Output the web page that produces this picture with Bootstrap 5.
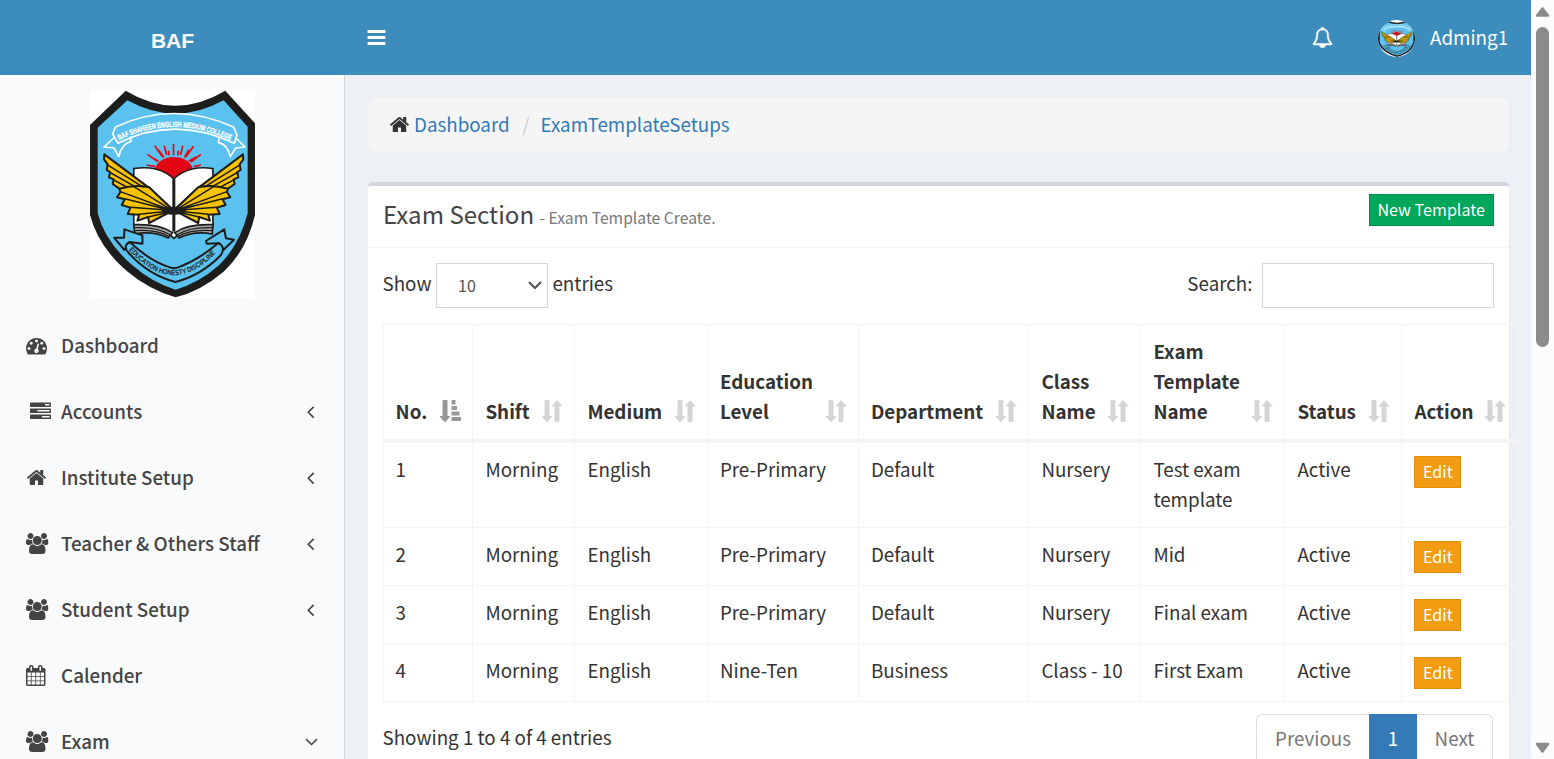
<!DOCTYPE html>
<html lang="en">
<head>
<meta charset="utf-8">
<title>Exam Template Setups</title>
<link rel="stylesheet" href="https://cdn.jsdelivr.net/npm/bootstrap@5.3.0/dist/css/bootstrap.min.css">
<style>
  html, body { height: 759px; overflow: hidden; }
  body { font-family: "Noto Sans CJK SC", "Open Sans", sans-serif; font-size: 18.8px; line-height: 30px; color: #333; background: #ecf0f5; }
  a { text-decoration: none; color: #337ab7; }
  .fa { width: 21px; height: 21px; fill: currentColor; display: block; flex: none; }
  .fa-wide { width: 22.5px; }
  .viewport { width: 1531px; height: 759px; overflow: hidden; }
  .topbar { height: 75px; background: #3c8dbc; color: #fff; }
  .brand { width: 345px; font: 700 21px/82px "Liberation Sans", sans-serif; text-align: center; height: 75px; }
  .bars { margin-left: 21px; }
  .bell { stroke: #fff; stroke-width: 40; }
  .avatar { width: 37px; height: 37px; overflow: hidden; border-radius: 50%; margin: 1px 15px 0 45px; }
  .who { width: 101px; padding-bottom: 2px; }
  .sidebar { width: 345px; background: #f9fafc; border-right: 1px solid #d2d6de; height: 684px; }
  .crest { width: 165px; height: 208px; margin: 15px 0 0 90px; display: block; }
  .menu { margin-top: 14px; }
  .menu a { height: 66px; color: #444; font-weight: 500; padding-left: 26px; padding-right: 23.5px; }
  .menu .ico { width: 35px; flex: none; }
  .menu .turned { margin-right: -1px; }
  .pagebody { width: 1186px; padding: 23px 22px 0 23px; }
  .crumbs { height: 54px; background: #f5f5f5; border-radius: 7px; padding: 0 21.5px 2px; }
  .crumbs .fa { margin-right: 4px; margin-left: -.5px; }
  .crumbs .slash { color: #ccc; margin: 0 11px 0 12.5px; }
  .panel { margin-top: 30px; background: #fff; border-top: 4px solid #d2d6de; border-radius: 5px 5px 0 0; box-shadow: 0 1px 1px rgba(0,0,0,.1); height: 640px; }
  .panel-top { height: 62px; border-bottom: 1px solid #f4f4f4; padding: 8px 15px; }
  .panel-top h3 { font-size: 24.1px; line-height: 42px; font-weight: 400; margin: -1px 0 0; color: #444; }
  .panel-top small { font-size: 15.7px; color: #777; }
  .btn-flat { border-radius: 0; height: 32px; font-size: 16.1px; line-height: 28px; padding: 0 8px 0 7px; color: #fff; display: inline-block; white-space: nowrap; }
  .btn-make { background: #00a65a; border: 1px solid #008d4c; }
  .btn-edit { background: #f39c12; border: 1px solid #e08e0b; margin-top: 2px; display: block; width: 47px; text-align: center; padding: 0; }
  .tools { padding: 15px 15px 0 14.5px; height: 76px; }
  .tools .lbl { padding-top: 5px; }
  .tools .field { height: 45px; border: 1px solid #d2d6de; border-radius: 0; background: #fff; }
  .tools .pick { width: 112px; margin: 0 4.5px; padding: 0 5px 0 21px; font-size: 16.1px; color: #555; }
  .pick span { padding-bottom: 2px; }
  .tools .seek { width: 232px; margin-left: 9.5px; }
  .grid { table-layout: fixed; width: 1136px; margin-left: 15px; border-collapse: separate; border-spacing: 0; border: 1px solid #f4f4f4; border-width: 1px 0 0 1px; }
  .grid th, .grid td { padding: 11px 0 0 12.4px; border-right: 1px solid #f4f4f4; border-bottom: 1px solid #f4f4f4; height: 58px; vertical-align: top; }
  .grid th { height: 118px; vertical-align: bottom; border-bottom-width: 4px; padding: 0 11.5px 13px 12.4px; font-weight: 700; }
  .grid tr > :first-child { padding-left: 11.6px; }
  .grid tr > :nth-child(4), .grid tr > :nth-child(5) { padding-left: 11.9px; }
  .grid tbody tr:first-child td { height: 85px; padding-right: 12px; }
  .grid th svg { width: 22px; height: 22px; fill: #333; flex: none; margin: 0 0 4px -22px; opacity: .2; display: block; }
  .grid th svg.on { opacity: .5; }
  .grid th:last-child svg { margin-right: 1px; }
  .tail { padding: 12px 16px 0 14.5px; }
  .count { padding-top: 8px; }
  .pager > a { height: 51px; line-height: 46px; border: 1px solid #ddd; text-align: center; color: #777; }
  .pager .wide { width: 113px; }
  .pager .next { width: 76px; }
  .pager .now { width: 48px; background: #337ab7; border-color: #337ab7; color: #fff; }
  .rail { width: 23px; height: 759px; background: #fcfcfc; }
  .rail .thumb { width: 13px; height: 320px; border-radius: 7px; background: #8b8b8b; margin: 6px 0 0 5px; }
</style>
</head>
<body class="d-flex">
<svg width="0" height="0" class="position-absolute">
  <defs>
    <symbol id="home" viewBox="0 0 1792 1792"><path d="M1472 992v480q0 26-19 45t-45 19h-384v-384h-256v384h-384q-26 0-45-19t-19-45v-480q0-1 .5-3t.5-3l575-474 575 474q1 2 1 6zm223-69l-62 74q-8 9-21 11h-3q-13 0-21-7l-692-577-692 577q-12 8-24 7-13-2-21-11l-62-74q-8-10-7-23.5t11-21.5l719-599q32-26 76-26t76 26l244 204v-195q0-14 9-23t23-9h192q14 0 23 9t9 23v408l219 182q10 8 11 21.5t-7 23.5z"/></symbol>
    <symbol id="users" viewBox="0 0 1920 1792"><path d="M593 896q-162 5-265 128h-134q-82 0-138-40.5t-56-118.5q0-353 124-353 6 0 43.5 21t97.5 42.5 119 21.5q67 0 133-23-5 37-5 66 0 139 81 256zm1071 637q0 120-73 189.5t-194 69.5h-874q-121 0-194-69.5t-73-189.5q0-53 3.5-103.5t14-109 26.5-108.5 43-97.5 62-81 85.5-53.5 111.5-20q10 0 43 21.5t73 48 107 48 135 21.5 135-21.5 107-48 73-48 43-21.5q61 0 111.5 20t85.5 53.5 62 81 43 97.5 26.5 108.5 14 109 3.5 103.5zm-1024-1277q0 106-75 181t-181 75-181-75-75-181 75-181 181-75 181 75 75 181zm704 384q0 159-112.5 271.5t-271.5 112.5-271.5-112.5-112.5-271.5 112.5-271.5 271.5-112.5 271.5 112.5 112.5 271.5zm576 225q0 78-56 118.5t-138 40.5h-134q-103-123-265-128 81-117 81-256 0-29-5-66 66 23 133 23 59 0 119-21.5t97.5-42.5 43.5-21q124 0 124 353zm-128-609q0 106-75 181t-181 75-181-75-75-181 75-181 181-75 181 75 75 181z"/></symbol>
    <symbol id="left" viewBox="0 0 1792 1792"><path d="M1203 544q0 13-10 23l-393 393 393 393q10 10 10 23t-10 23l-50 50q-10 10-23 10t-23-10l-466-466q-10-10-10-23t10-23l466-466q10-10 23-10t23 10l50 50q10 10 10 23z"/></symbol>
    <symbol id="down" viewBox="0 0 1792 1792"><path d="M1395 736q0 13-10 23l-466 466q-10 10-23 10t-23-10l-466-466q-10-10-10-23t10-23l50-50q10-10 23-10t23 10l393 393 393-393q10-10 23-10t23 10l50 50q10 10 10 23z"/></symbol>
    <symbol id="sort" viewBox="0 0 22 22"><path d="M3.5 1q0-1 1-1h3q1 0 1 1v15h2.2q.9 0 .3.8l-4.4 4.9q-.6.6-1.2 0L.8 16.8q-.6-.8.3-.8h2.4zM13.5 21q0 1 1 1h3q1 0 1-1V6.500h2.400q.9 0 .3-.8L16.600.8q-.6-.6-1.200 0L11 5.700q-.6.8.3.8h2.200z"/></symbol>
    <symbol id="sorted" viewBox="0 0 22 22"><path d="M3.500 1q0-1 1-1h3q1 0 1 1v15h2.200q.9 0 .3.8l-4.400 4.900q-.6.6-1.200 0L.8 16.800q-.6-.8.3-.8h2.400zM12.500 0h4v4.500h-4zM12.500 6h5.500v4h-5.500zM12.500 11.500h8v4h-8zM12.500 17h9.500v4h-9.500z"/></symbol>
    <symbol id="crest" viewBox="30 30 494 624" preserveAspectRatio="none">
      <path fill="#fff" d="M30 30h494v624H30z"/>
      <path fill="#1d1d1b" d="M137 32Q285 122 435 32L524 130V405Q500 510 430 575Q360 634 286 652Q205 628 140 573Q55 500 30 405V135Z"/>
      <path fill="#5bc2f0" d="M142 61Q285 141 430 61L502 140V400Q478 495 416 556Q355 610 286 629Q215 607 156 555Q75 485 53 400V143Z"/>
      <g fill="none" stroke="#fff" stroke-width="5" stroke-linejoin="round">
        <path d="M98 162L106 141Q280 60 460 141L470 165L462 190Q280 105 114 190L98 162ZM104 171L72 201L102 204L116 230Q123 194 153 184L150 170M464 171L494 201L466 204L450 230Q443 194 414 187L417 173"/>
      </g>
      <path id="topArc" fill="none" d="M117 181Q285 97 470 190"/>
      <text font-family="Liberation Sans, sans-serif" font-weight="700" font-size="23" fill="#fff" stroke="#fff" stroke-width=".8"><textPath href="#topArc" textLength="346" lengthAdjust="spacingAndGlyphs">BAF SHAHEEN ENGLISH MEDIUM COLLEGE</textPath></text>
      <path fill="#e30613" d="M224 266Q238 231 281 231Q325 231 338 266L281 302Z"/>
      <path stroke="#e30613" stroke-width="5" fill="none" d="M200 255L225 260M202 223L232 244M214 232L235 244M224 197L248 232M235 209L251 232M252 197L260 225M265 212L267 226M280 192V226M295 212L293 226M308 197L301 225M326 209L313 232M340 199L316 232M349 230L325 244M362 223L332 246M362 255L340 260"/>
      <g fill="#fff" stroke="#1d1d1b" stroke-width="5">
        <path d="M161 440V266Q195 260 226 267Q264 277 281 298Q298 277 336 267Q366 260 398 266V440Q320 437 281 475Q240 434 161 440Z"/>
        <path fill="none" stroke-width="9" d="M281 298V455"/>
      </g>
      <path fill="#aaa" stroke="#1d1d1b" stroke-width="5" d="M161 434Q240 431 277 458L264 474Q220 452 164 462ZM398 434Q321 431 284 458L297 474Q342 452 396 462Z"/>
      <path fill="none" stroke="#1d1d1b" stroke-width="3.500" d="M163 443Q233 440 271 465M163 452Q228 447 268 470M397 443Q327 440 290 465M397 452Q332 447 293 470"/>
      <g id="wing" fill="#f9c300" stroke="#1d1d1b" stroke-width="6" stroke-linejoin="round">
        <path d="M73 223L205 322L273 385L215 350L118 326L98 312L101 298L87 292L90 276L80 270L83 253L72 238Z"/>
        <path d="M118 326Q165 312 207 322L279 391L207 429L204 411L172 422L177 404L143 402L151 383L125 375L134 358L111 352L121 336Z"/>
        <path fill="none" stroke-width="4.500" d="M80 253L190 322M87 276L165 320M98 298L140 321M121 335L271 390M134 356L271 391M151 382L271 391M177 403L271 393M204 411L271 395M160 319L271 388"/>
      </g>
      <use href="#wing" transform="translate(561 0) scale(-1 1)"/>
      <ellipse cx="281" cy="392" rx="36" ry="12" fill="#1d1d1b"/>
      <g fill="#5bc2f0" stroke="#1d1d1b" stroke-width="6" stroke-linejoin="round">
        <path d="M133 448L187 466V491L149 486L133 510L102 473L132 473ZM432 448L377 483L380 491L414 490L430 509L461 479L437 475Z"/>
        <path d="M149 486Q126 498 146 519Q205 585 286 606Q365 585 422 525Q437 500 414 489Q355 540 294 562Q282 567 269 562Q210 544 149 486Z"/>
      </g>
      <path id="lowArc" fill="none" d="M146 510Q283 662 416 508"/>
      <text font-family="Liberation Sans, sans-serif" font-weight="700" font-size="22" fill="#1d1d1b"><textPath href="#lowArc" textLength="305" lengthAdjust="spacingAndGlyphs">EDUCATION HONESTY DISCIPLINE</textPath></text>
    </symbol>
  </defs>
</svg>

<div class="viewport">
  <header class="topbar d-flex align-items-center">
    <div class="brand">BAF</div>
    <svg class="fa bars" viewBox="0 0 1792 1792"><path d="M1664 1344v128q0 26-19 45t-45 19H192q-26 0-45-19t-19-45v-128q0-26 19-45t45-19h1408q26 0 45 19t19 45zm0-512v128q0 26-19 45t-45 19H192q-26 0-45-19t-19-45V832q0-26 19-45t45-19h1408q26 0 45 19t19 45zm0-512v128q0 26-19 45t-45 19H192q-26 0-45-19t-19-45V320q0-26 19-45t45-19h1408q26 0 45 19t19 45z"/></svg>
    <div class="ms-auto d-flex align-items-center">
      <svg class="fa bell" viewBox="0 0 1792 1792"><path d="M912 1696q0-16-16-16-59 0-101.500-42.500t-42.500-101.500q0-16-16-16t-16 16q0 73 51.500 124.500t124.500 51.500q16 0 16-16zm-666-288h1300q-266-300-266-832 0-51-24-105t-69-103-121.500-80.500-169.500-31.500-169.500 31.500-121.500 80.500-69 103-24 105q0 532-266 832zm1482 0q0 52-38 90t-90 38h-448q0 106-75 181t-181 75-181-75-75-181h-448q-52 0-90-38t-38-90q50-42 91-88t85-119.500 74.500-158.500 50-206 19.500-260q0-152 117-282.500t307-158.500q-8-19-8-39 0-40 28-68t68-28 68 28 28 68q0 20-8 39 190 28 307 158.500t117 282.500q0 139 19.500 260t50 206 74.500 158.500 85 119.500 91 88z"/></svg>
      <div class="avatar"><svg width="37" height="37" class="d-block"><use href="#crest" width="37" height="37"/></svg></div>
      <span class="who">Adming1</span>
    </div>
  </header>
  <div class="d-flex">
    <aside class="sidebar">
      <svg class="crest"><use href="#crest" width="165" height="208"/></svg>
      <nav class="menu">
        <a href="#" class="d-flex align-items-center"><span class="ico"><svg class="fa" viewBox="0 0 1792 1792"><path d="M384 1152q0-53-37.500-90.500t-90.500-37.500-90.500 37.500-37.500 90.500 37.500 90.500 90.500 37.500 90.500-37.500 37.500-90.500zm192-448q0-53-37.500-90.500t-90.500-37.500-90.500 37.500-37.500 90.500 37.500 90.500 90.500 37.500 90.500-37.500 37.500-90.500zm428 481l101-382q6-26-7.500-48.500t-38.500-29.500-48 6.500-30 39.500l-101 382q-60 5-107 43.500t-63 98.500q-20 77 20 146t117 89 146-20 89-117q16-60-6-117t-72-91zm660-33q0-53-37.500-90.500t-90.500-37.500-90.500 37.500-37.500 90.500 37.500 90.500 90.500 37.500 90.500-37.500 37.500-90.500zm-640-640q0-53-37.500-90.500t-90.500-37.500-90.500 37.500-37.500 90.500 37.500 90.500 90.500 37.500 90.500-37.500 37.500-90.500zm448 192q0-53-37.500-90.500t-90.500-37.500-90.500 37.500-37.500 90.500 37.500 90.500 90.500 37.500 90.500-37.500 37.500-90.500zm320 448q0 261-141 483-19 29-54 29h-1402q-35 0-54-29-141-221-141-483 0-182 71-348t191-286 286-191 348-71 348 71 286 191 191 286 71 348z"/></svg></span><span>Dashboard</span></a>
        <a href="#" class="d-flex align-items-center"><span class="ico ps-1"><svg class="fa" viewBox="0 0 1792 1792"><path fill-rule="evenodd" d="M64 128h1664q64 0 64 64v256q0 64-64 64H64q-64 0-64-64V192q0-64 64-64zM1280 256v128h384V256zM64 640h1664q64 0 64 64v256q0 64-64 64H64q-64 0-64-64V704q0-64 64-64zM640 768v128h1024V768zM64 1152h1664q64 0 64 64v256q0 64-64 64H64q-64 0-64-64v-256q0-64 64-64zM1024 1280v128h640v-128z"/></svg></span><span>Accounts</span><svg class="fa ms-auto"><use href="#left"/></svg></a>
        <a href="#" class="d-flex align-items-center"><span class="ico"><svg class="fa"><use href="#home"/></svg></span><span>Institute Setup</span><svg class="fa ms-auto"><use href="#left"/></svg></a>
        <a href="#" class="d-flex align-items-center"><span class="ico"><svg class="fa fa-wide"><use href="#users"/></svg></span><span>Teacher &amp; Others Staff</span><svg class="fa ms-auto"><use href="#left"/></svg></a>
        <a href="#" class="d-flex align-items-center"><span class="ico"><svg class="fa fa-wide"><use href="#users"/></svg></span><span>Student Setup</span><svg class="fa ms-auto"><use href="#left"/></svg></a>
        <a href="#" class="d-flex align-items-center"><span class="ico"><svg class="fa" viewBox="64 0 1792 1792"><path d="M192 1664h288v-288h-288v288zm352 0h320v-288h-320v288zm-352-352h288v-320h-288v320zm352 0h320v-320h-320v320zm-352-384h288v-288h-288v288zm736 736h320v-288h-320v288zm-384-736h320v-288h-320v288zm768 736h288v-288h-288v288zm-384-352h320v-320h-320v320zm-352-864v-288q0-13-9.500-22.500t-22.500-9.500h-64q-13 0-22.500 9.500t-9.500 22.500v288q0 13 9.500 22.500t22.500 9.500h64q13 0 22.500-9.500t9.500-22.500zm736 864h288v-320h-288v320zm-384-384h320v-288h-320v288zm384 0h288v-288h-288v288zm32-480v-288q0-13-9.500-22.500t-22.500-9.500h-64q-13 0-22.500 9.500t-9.500 22.500v288q0 13 9.500 22.500t22.500 9.500h64q13 0 22.500-9.500t9.500-22.500zm384-64v1280q0 52-38 90t-90 38h-1408q-52 0-90-38t-38-90v-1280q0-52 38-90t90-38h128v-96q0-66 47-113t113-47h64q66 0 113 47t47 113v96h384v-96q0-66 47-113t113-47h64q66 0 113 47t47 113v96h128q52 0 90 38t38 90z"/></svg></span><span>Calender</span></a>
        <a href="#" class="d-flex align-items-center"><span class="ico"><svg class="fa fa-wide"><use href="#users"/></svg></span><span>Exam</span><svg class="fa ms-auto turned"><use href="#down"/></svg></a>
      </nav>
    </aside>

    <main class="pagebody">
      <nav class="crumbs d-flex align-items-center">
        <svg class="fa"><use href="#home"/></svg><a href="#">Dashboard</a><span class="slash">/</span><a href="#">ExamTemplateSetups</a>
      </nav>
      <section class="panel">
        <div class="panel-top d-flex justify-content-between align-items-start">
          <h3>Exam Section <small>- Exam Template Create.</small></h3>
          <a href="#" class="btn-flat btn-make">New Template</a>
        </div>
        <div class="tools d-flex justify-content-between">
          <div class="d-flex"><span class="lbl">Show</span>
            <div class="field pick d-flex align-items-center justify-content-between"><span>10</span><svg width="14" height="9" viewBox="0 0 14 9" fill="none" stroke="#555" stroke-width="2.200"><path d="M1 1l6 6 6-6"/></svg></div>
            <span class="lbl">entries</span></div>
          <div class="d-flex"><label class="lbl" for="seek">Search:</label><input id="seek" class="field seek"></div>
        </div>
        <table class="grid">
          <colgroup><col style="width:89px"><col style="width:102px"><col style="width:133px"><col style="width:151px"><col style="width:170px"><col style="width:112px"><col style="width:144px"><col style="width:117px"><col style="width:117px"></colgroup>
          <thead><tr>
            <th><div class="d-flex justify-content-between align-items-end">No.<svg class="on"><use href="#sorted"/></svg></div></th>
            <th><div class="d-flex justify-content-between align-items-end">Shift<svg><use href="#sort"/></svg></div></th>
            <th><div class="d-flex justify-content-between align-items-end">Medium<svg><use href="#sort"/></svg></div></th>
            <th><div class="d-flex justify-content-between align-items-end">Education Level<svg><use href="#sort"/></svg></div></th>
            <th><div class="d-flex justify-content-between align-items-end">Department<svg><use href="#sort"/></svg></div></th>
            <th><div class="d-flex justify-content-between align-items-end"><span>Class<br>Name</span><svg><use href="#sort"/></svg></div></th>
            <th><div class="d-flex justify-content-between align-items-end"><span>Exam<br>Template<br>Name</span><svg><use href="#sort"/></svg></div></th>
            <th><div class="d-flex justify-content-between align-items-end">Status<svg><use href="#sort"/></svg></div></th>
            <th><div class="d-flex justify-content-between align-items-end">Action<svg><use href="#sort"/></svg></div></th>
          </tr></thead>
          <tbody>
            <tr><td>1</td><td>Morning</td><td>English</td><td>Pre-Primary</td><td>Default</td><td>Nursery</td><td>Test exam template</td><td>Active</td><td><a href="#" class="btn-flat btn-edit">Edit</a></td></tr>
            <tr><td>2</td><td>Morning</td><td>English</td><td>Pre-Primary</td><td>Default</td><td>Nursery</td><td>Mid</td><td>Active</td><td><a href="#" class="btn-flat btn-edit">Edit</a></td></tr>
            <tr><td>3</td><td>Morning</td><td>English</td><td>Pre-Primary</td><td>Default</td><td>Nursery</td><td>Final exam</td><td>Active</td><td><a href="#" class="btn-flat btn-edit">Edit</a></td></tr>
            <tr><td>4</td><td>Morning</td><td>English</td><td>Nine-Ten</td><td>Business</td><td>Class - 10</td><td>First Exam</td><td>Active</td><td><a href="#" class="btn-flat btn-edit">Edit</a></td></tr>
          </tbody>
        </table>
        <div class="tail d-flex justify-content-between">
          <div class="count">Showing 1 to 4 of 4 entries</div>
          <div class="pager d-flex">
            <a href="#" class="wide rounded-start border-end-0">Previous</a>
            <a href="#" class="now">1</a>
            <a href="#" class="next rounded-end border-start-0">Next</a>
          </div>
        </div>
      </section>
    </main>
  </div>
</div>
<div class="rail d-flex flex-column">
  <svg width="23" height="21" viewBox="0 0 23 21"><path d="M11.500 8.500L17 15.500H6Z" fill="#8b8b8b" stroke="#8b8b8b" stroke-width="2.500" stroke-linejoin="round"/></svg>
  <div class="thumb"></div>
  <svg class="mt-auto" width="23" height="21" viewBox="0 0 23 21"><path d="M11.500 13.500L17 6H6Z" fill="#8b8b8b" stroke="#8b8b8b" stroke-width="2.500" stroke-linejoin="round"/></svg>
</div>
<script src="https://cdn.jsdelivr.net/npm/bootstrap@5.3.0/dist/js/bootstrap.bundle.min.js"></script>
</body>
</html>
